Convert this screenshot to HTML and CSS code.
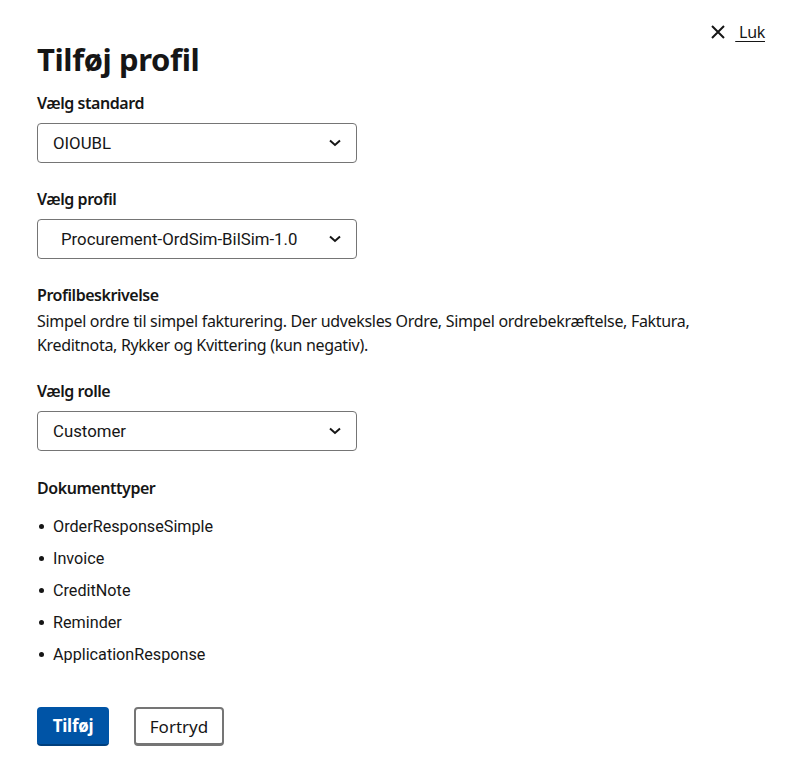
FILE: index.html
```html
<!DOCTYPE html>
<html lang="da">
<head>
<meta charset="utf-8">
<title>Tilføj profil</title>
<link rel="stylesheet" href="styles.css">
</head>
<body>
<div class="page">
  <div class="header">
    <h1 class="title">Tilføj profil</h1>
    <a class="close" href="#">
      <svg class="close-icon" width="14" height="14" viewBox="0 0 14 14"><path d="M1 1L13 13M13 1L1 13" stroke="#161616" stroke-width="2" fill="none"/></svg>
      <span class="close-text">&nbsp;Luk</span>
    </a>
  </div>

  <div class="field">
    <div class="label">Vælg standard</div>
    <div class="select"><span>OIOUBL</span><svg class="chev" width="12" height="8" viewBox="0 0 12 8"><path d="M1 1.5L6 6L11 1.5" stroke="#161616" stroke-width="2" fill="none"/></svg></div>
  </div>

  <div class="field">
    <div class="label">Vælg profil</div>
    <div class="select select-profile"><span>Procurement-OrdSim-BilSim-1.0</span><svg class="chev" width="12" height="8" viewBox="0 0 12 8"><path d="M1 1.5L6 6L11 1.5" stroke="#161616" stroke-width="2" fill="none"/></svg></div>
  </div>

  <div class="field">
    <div class="label">Profilbeskrivelse</div>
    <p class="desc">Simpel ordre til simpel fakturering. Der udveksles Ordre, Simpel ordrebekræftelse, Faktura, Kreditnota, Rykker og Kvittering (kun negativ).</p>
  </div>

  <div class="field field-role">
    <div class="label">Vælg rolle</div>
    <div class="select"><span>Customer</span><svg class="chev" width="12" height="8" viewBox="0 0 12 8"><path d="M1 1.5L6 6L11 1.5" stroke="#161616" stroke-width="2" fill="none"/></svg></div>
  </div>

  <div class="field field-docs">
    <div class="label">Dokumenttyper</div>
    <ul class="doclist">
      <li>OrderResponseSimple</li>
      <li>Invoice</li>
      <li>CreditNote</li>
      <li>Reminder</li>
      <li>ApplicationResponse</li>
    </ul>
  </div>

  <div class="actions">
    <button class="btn btn-primary" type="button">Tilføj</button>
    <button class="btn btn-secondary" type="button">Fortryd</button>
  </div>
</div>
</body>
</html>
```

FILE: styles.css
```css
* { box-sizing: border-box; }
html, body { margin: 0; padding: 0; background: #ffffff; }
body {
  font-family: "Noto Sans", "Open Sans", sans-serif;
  color: #161616;
  font-size: 16px;
}
.page {
  padding: 22px 32px 0 37px;
  display: flex;
  flex-direction: column;
}
.header {
  display: flex;
  justify-content: space-between;
  align-items: flex-start;
}
.title {
  margin: 17px 0 0 0;
  font-size: 31px;
  line-height: 40px;
  font-weight: 700;
  letter-spacing: -0.4px;
}
.close {
  display: flex;
  align-items: center;
  gap: 10px;
  color: #161616;
  text-decoration: none;
  height: 20px;
  font-size: 16px;
  letter-spacing: -0.3px;
}
.close-text {
  text-decoration: underline;
  text-underline-offset: 3px;
}
.field {
  display: flex;
  flex-direction: column;
  margin-top: 12px;
}
.field + .field { margin-top: 24px; }
.field-role { margin-top: 22px !important; }
.field-docs { margin-top: 25px !important; }
.label {
  font-weight: 600;
  font-size: 16px;
  line-height: 24px;
  letter-spacing: -0.45px;
}
.select {
  margin-top: 8px;
  width: 320px;
  height: 40px;
  border: 1px solid #757575;
  border-radius: 4px;
  display: flex;
  align-items: center;
  justify-content: space-between;
  padding: 0 15px;
  font-family: Roboto, "Liberation Sans", sans-serif;
  font-size: 16.8px;
}
.select-profile { padding-left: 23px; }
.chev { display: block; }
.desc {
  margin: 2px 0 0 0;
  line-height: 24px;
  max-width: 720px;
  letter-spacing: -0.32px;
}
.doclist {
  list-style: none;
  margin: 15px 0 0 0;
  padding: 0;
  display: flex;
  flex-direction: column;
  gap: 8px;
  font-family: Roboto, "Liberation Sans", sans-serif;
  font-size: 16.2px;
}
.doclist li {
  line-height: 24px;
  padding-left: 16px;
  position: relative;
}
.doclist li::before {
  content: "";
  position: absolute;
  left: 2px;
  top: 9px;
  width: 5px;
  height: 5px;
  border-radius: 50%;
  background: #161616;
}
.actions {
  display: flex;
  gap: 25px;
  margin-top: 40px;
}
.btn {
  font-family: "Noto Sans", "Open Sans", sans-serif;
  font-size: 17px;
  height: 39px;
  border-radius: 4px;
  cursor: pointer;
}
.btn-primary {
  background: #0054a6;
  color: #ffffff;
  font-weight: 700;
  border: none;
  border-bottom: 2px solid #003f7d;
  width: 72px;
  padding: 0;
  letter-spacing: -0.3px;
}
.btn-secondary {
  background: #ffffff;
  color: #161616;
  border: 2px solid #757575;
  border-bottom-width: 3px;
  width: 90px;
  padding: 0;
}
```
